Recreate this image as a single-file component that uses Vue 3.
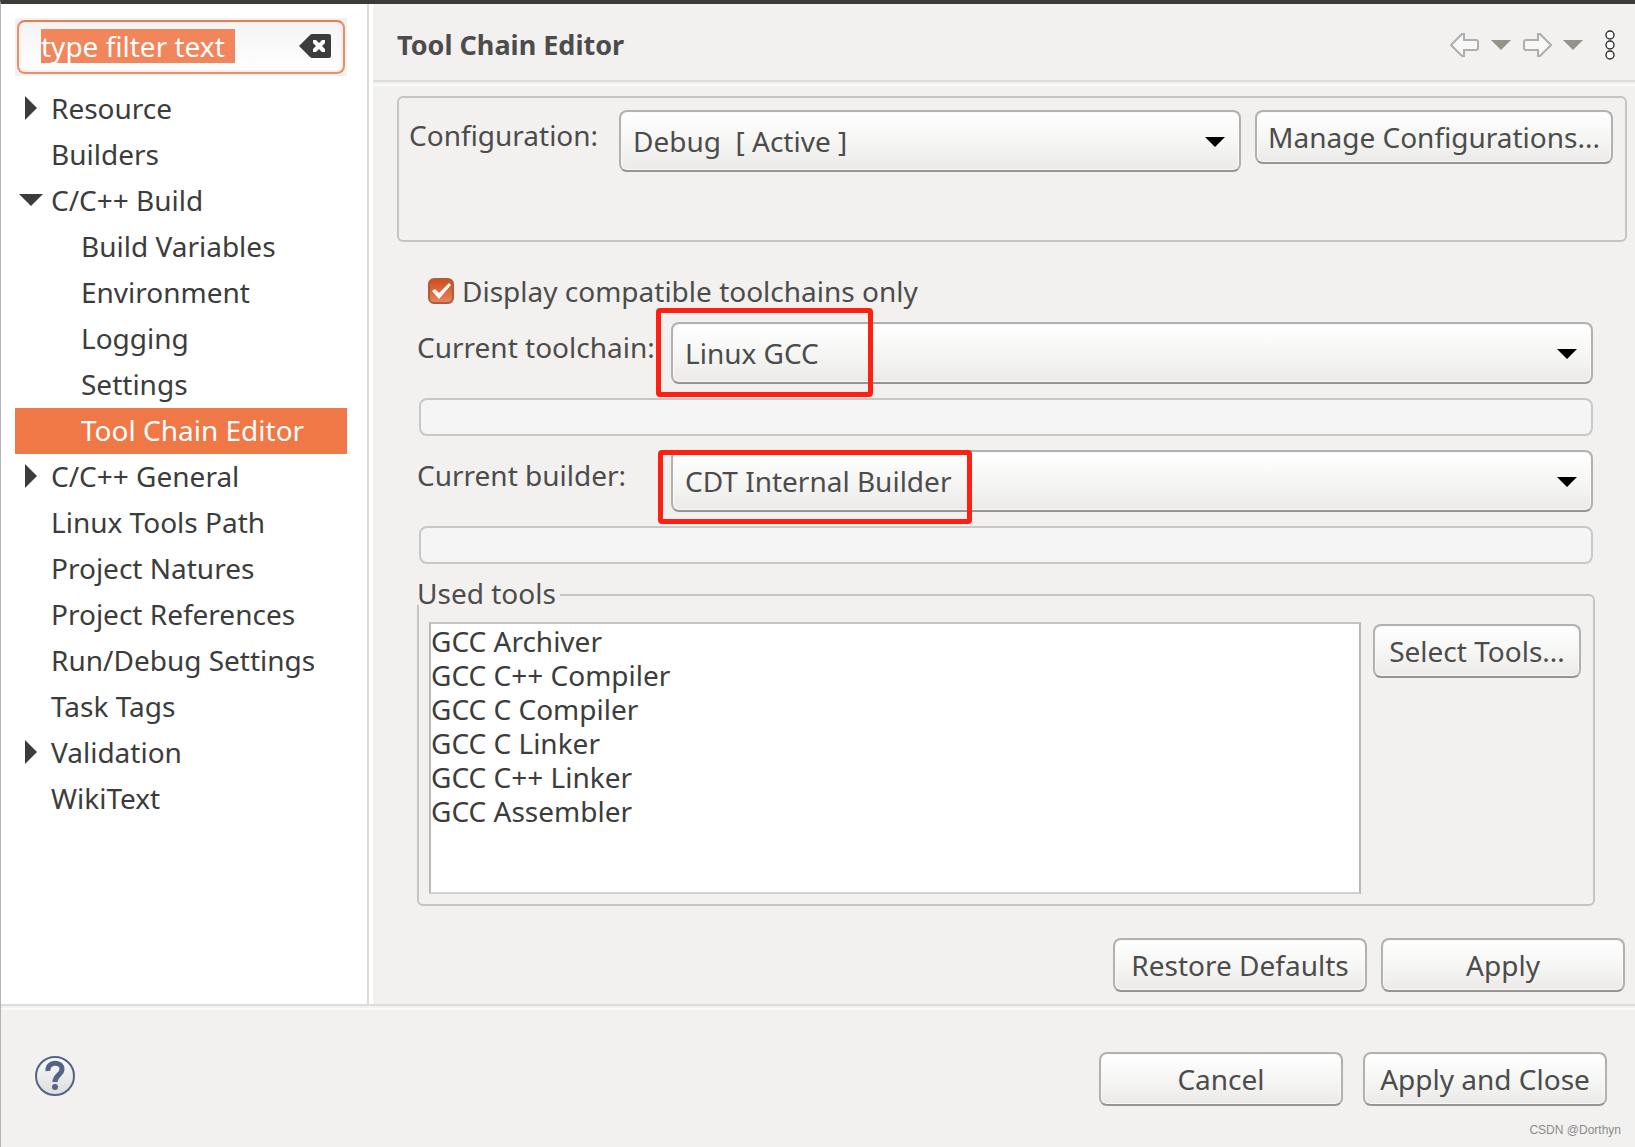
<script setup>
import { ref } from 'vue'

const filterText = ref('type filter text')
const selectedPage = ref('Tool Chain Editor')
const compatibleOnly = ref(true)

const pages = [
  { name: 'Resource', state: 'closed' },
  { name: 'Builders' },
  { name: 'C/C++ Build', state: 'open' },
  { name: 'Build Variables', child: true },
  { name: 'Environment', child: true },
  { name: 'Logging', child: true },
  { name: 'Settings', child: true },
  { name: 'Tool Chain Editor', child: true },
  { name: 'C/C++ General', state: 'closed' },
  { name: 'Linux Tools Path' },
  { name: 'Project Natures' },
  { name: 'Project References' },
  { name: 'Run/Debug Settings' },
  { name: 'Task Tags' },
  { name: 'Validation', state: 'closed' },
  { name: 'WikiText' },
]

const tools = [
  'GCC Archiver',
  'GCC C++ Compiler',
  'GCC C Compiler',
  'GCC C Linker',
  'GCC C++ Linker',
  'GCC Assembler',
]
</script>

<template>
  <div class="window">
    <div class="columns">
      <aside class="sidebar">
        <div class="filter">
          <div class="filter-box">
            <div class="filter-text">
              <input v-model="filterText" type="text" aria-label="Filter" />
            </div>
            <button class="clear" type="button" aria-label="Clear filter" @click="filterText = ''">
              <svg width="32" height="24" viewBox="0 0 32 24">
                <path d="M0 12 11 1Q12 0 13 0H30Q32 0 32 2V22Q32 24 30 24H13Q12 24 11 23Z" fill="#3c3c3c" />
                <path d="M14 6H17L20 9 23 6H26V9L23 12 26 15V18H23L20 15 17 18H14V15L17 12 14 9Z" fill="#fff" />
              </svg>
            </button>
          </div>
        </div>
        <ul class="tree" role="tree">
          <li
            v-for="page in pages"
            :key="page.name"
            role="treeitem"
            :class="{ child: page.child, selected: page.name === selectedPage }"
            @click="selectedPage = page.name"
          >
            <span class="twisty">
              <svg v-if="page.state === 'closed'" width="12" height="24" viewBox="0 0 12 24">
                <path d="M0 0 12 12 0 24Z" fill="#3c3c3c" />
              </svg>
              <svg v-if="page.state === 'open'" width="24" height="12" viewBox="0 0 24 12">
                <path d="M0 0H24L12 12Z" fill="#3c3c3c" />
              </svg>
            </span>
            <span>{{ page.name }}</span>
          </li>
        </ul>
      </aside>

      <main class="page">
        <header class="page-head">
          <h1>Tool Chain Editor</h1>
          <nav class="history">
            <button type="button" aria-label="Back">
              <svg width="30" height="24" viewBox="0 0 30 24">
                <path d="M1 12 12 1H14V7H26Q28 7 28 9V15Q28 17 26 17H14V23H12Z" fill="#f8f8f8" stroke="#aeaeac" stroke-width="2" />
              </svg>
            </button>
            <button type="button" aria-label="Back history">
              <svg width="20" height="10" viewBox="0 0 20 10"><path d="M0 0H20L10 10Z" fill="#95928a" /></svg>
            </button>
            <button type="button" aria-label="Forward">
              <svg width="30" height="24" viewBox="0 0 30 24">
                <path d="M29 12 18 1H16V7H4Q2 7 2 9V15Q2 17 4 17H16V23H18Z" fill="#f8f8f8" stroke="#aeaeac" stroke-width="2" />
              </svg>
            </button>
            <button type="button" aria-label="Forward history">
              <svg width="20" height="10" viewBox="0 0 20 10"><path d="M0 0H20L10 10Z" fill="#95928a" /></svg>
            </button>
            <button class="menu" type="button" aria-label="View menu">
              <svg width="10" height="30" viewBox="0 0 10 30" fill="#fff" stroke="#2e2e2e" stroke-width="1.4">
                <circle cx="5" cy="5" r="4" />
                <circle cx="5" cy="15" r="4" />
                <circle cx="5" cy="25" r="4" />
              </svg>
            </button>
          </nav>
        </header>

        <div class="page-body">
          <section class="configuration">
            <label for="configuration">Configuration:</label>
            <div class="combo">
              <select id="configuration">
                <option>Debug&nbsp; [ Active ]</option>
              </select>
              <svg class="arrow" width="20" height="10" viewBox="0 0 20 10"><path d="M0 0H20L10 10Z" /></svg>
            </div>
            <button class="btn" type="button">Manage Configurations...</button>
          </section>

          <section class="editor">
            <label class="check">
              <input v-model="compatibleOnly" type="checkbox" />
              <svg v-if="compatibleOnly" class="tick" width="26" height="26" viewBox="0 0 26 26">
                <path d="M4 13 7 11 11 15 21 5 23 7 11 21Z" fill="#fff" />
              </svg>
              <span>Display compatible toolchains only</span>
            </label>

            <div class="field">
              <label for="toolchain">Current toolchain:</label>
              <div class="combo">
                <select id="toolchain">
                  <option>Linux GCC</option>
                </select>
                <svg class="arrow" width="20" height="10" viewBox="0 0 20 10"><path d="M0 0H20L10 10Z" /></svg>
                <span class="mark mark-toolchain"></span>
              </div>
            </div>
            <input class="status" type="text" aria-label="Toolchain status" readonly />

            <div class="field">
              <label for="builder">Current builder:</label>
              <div class="combo">
                <select id="builder">
                  <option>CDT Internal Builder</option>
                </select>
                <svg class="arrow" width="20" height="10" viewBox="0 0 20 10"><path d="M0 0H20L10 10Z" /></svg>
                <span class="mark mark-builder"></span>
              </div>
            </div>
            <input class="status" type="text" aria-label="Builder status" readonly />

            <fieldset class="used">
              <legend>Used tools</legend>
              <div class="used-row">
                <ul class="tools">
                  <li v-for="tool in tools" :key="tool">{{ tool }}</li>
                </ul>
                <button class="btn" type="button">Select Tools...</button>
              </div>
            </fieldset>
          </section>

          <div class="page-actions">
            <button class="btn restore" type="button">Restore Defaults</button>
            <button class="btn wide" type="button">Apply</button>
          </div>
        </div>
      </main>
    </div>

    <footer class="footer">
      <button class="help" type="button" aria-label="Help">
        <svg width="40" height="40" viewBox="0 0 40 40">
          <defs>
            <linearGradient id="help-fill" x1="0" y1="0" x2="0" y2="1">
              <stop offset="0" stop-color="#fbfbfb" />
              <stop offset="1" stop-color="#dcdcdc" />
            </linearGradient>
          </defs>
          <circle cx="20" cy="20" r="19" fill="url(#help-fill)" stroke="#536486" stroke-width="2" />
          <path d="M13 15C12 5 27 5 27 13C27 19 20 19 20 26" fill="none" stroke="#536486" stroke-width="5" />
          <circle cx="20" cy="31" r="3" fill="#536486" />
        </svg>
      </button>
      <div class="dialog-actions">
        <button class="btn wide" type="button">Cancel</button>
        <button class="btn wide" type="button">Apply and Close</button>
      </div>
      <small class="credit">CSDN @Dorthyn</small>
    </footer>
  </div>
</template>

<style>
body {
  margin: 0;
  background: #f2f1f0;
}
</style>

<style scoped>
* {
  box-sizing: border-box;
}

.window {
  display: flex;
  flex-direction: column;
  min-height: 100vh;
  border-top: 4px solid #3c3b37;
  border-left: 1px solid #b4b4b4;
  background: #f2f1f0;
  color: #4c4c4c;
  font: 28px/34px "Noto Sans", "Open Sans", sans-serif;
  white-space: nowrap;
}

button,
input,
select {
  font: inherit;
  color: inherit;
}

button {
  padding: 0;
  border: 0;
  background: none;
}

svg {
  display: block;
}

ul {
  margin: 0;
  padding: 0;
  list-style: none;
}

.columns {
  display: flex;
  flex: 1;
}

/* Sidebar */
.sidebar {
  flex: none;
  width: 372px;
  padding: 14px 20px 0 14px;
  background: linear-gradient(#dcdcdc, #dcdcdc) 366px 0 / 2px 100% no-repeat #fff;
}

.filter {
  width: 332px;
  padding: 2px;
  background: #f2f1f0;
}

.filter-box {
  display: flex;
  align-items: center;
  justify-content: space-between;
  height: 54px;
  padding: 0 12px 2px 22px;
  border: 2px solid #e5906c;
  border-top-color: #dd7f57;
  border-radius: 8px;
  background: linear-gradient(#f4f4f4, #fff);
  box-shadow: inset 0 0 0 2px #fbeee8;
}

.filter-text {
  display: flex;
  width: 194px;
}

.filter-text input {
  width: 100%;
  height: 34px;
  padding: 0;
  border: 0;
  background: #f1855b;
  color: #fff;
}

.tree {
  width: 332px;
  padding-top: 10px;
  color: #3c3c3c;
}

.tree li {
  display: flex;
  align-items: center;
  height: 46px;
  padding-bottom: 2px;
}

.tree .child {
  padding-left: 30px;
}

.tree .selected {
  background: #f07746;
  color: #fff;
}

.twisty {
  display: flex;
  justify-content: center;
  width: 36px;
  padding-right: 4px;
}

/* Page */
.page {
  display: flex;
  flex: 1;
  flex-direction: column;
  min-width: 0;
}

.page-head {
  display: flex;
  align-items: center;
  justify-content: space-between;
  height: 82px;
  padding: 2px 20px 0 24px;
  border-bottom: 2px solid #fafaf9;
  background: linear-gradient(#dddcdb, #dddcdb) 0 76px / 100% 2px no-repeat;
}

h1 {
  margin: 0;
  font-size: 27px;
  font-weight: 700;
}

.history {
  display: flex;
  align-items: center;
  gap: 11px;
}

.menu {
  margin-left: 11px;
}

.page-body {
  padding: 10px 8px 12px 24px;
}

.configuration {
  display: flex;
  align-items: flex-start;
  gap: 14px;
  height: 146px;
  padding: 12px;
  border: 2px solid #c5c4c2;
  border-radius: 6px;
}

.configuration label {
  width: 196px;
  padding-top: 8px;
  margin-left: -2px;
}

.combo {
  position: relative;
  flex: 1;
}

.combo select {
  display: block;
  width: 100%;
  height: 62px;
  padding: 0 48px 0 12px;
  line-height: 42px;
  appearance: none;
}

.combo select,
.btn {
  border: 2px solid #b2b1b0;
  border-bottom-color: #959493;
  border-radius: 8px;
  background: linear-gradient(#fff, #f6f6f5 50%, #ebeae9);
  box-shadow: inset 0 0 1px 1px #f9f9f9;
}

.arrow {
  position: absolute;
  top: 27px;
  right: 16px;
  pointer-events: none;
}

.btn {
  height: 54px;
  padding: 0 11px;
}

.wide {
  width: 244px;
  padding: 0;
}

.restore {
  width: 254px;
  padding: 0;
}

.editor {
  padding: 32px 34px 0 20px;
}

.check {
  position: relative;
  display: flex;
  align-items: center;
  gap: 8px;
  height: 34px;
  margin-left: 11px;
}

.check input {
  width: 26px;
  height: 26px;
  margin: 0;
  border: 2px solid #b25b3b;
  border-radius: 6px;
  background: #fff;
  appearance: none;
}

.check input:checked {
  background: linear-gradient(#cf4f1d, #e6835c);
}

.tick {
  position: absolute;
  top: 4px;
  left: 0;
  pointer-events: none;
}

.field {
  display: flex;
  align-items: flex-start;
  padding-top: 14px;
}

.field label {
  width: 254px;
  padding-top: 8px;
}

.mark {
  position: absolute;
  border: 5px solid #ff2012;
  border-radius: 4px;
  pointer-events: none;
}

.mark-toolchain {
  top: -14px;
  left: -15px;
  width: 217px;
  height: 89px;
}

.mark-builder {
  top: 0;
  left: -13px;
  width: 314px;
  height: 74px;
}

.status {
  display: block;
  width: calc(100% - 2px);
  height: 38px;
  margin: 14px 0 0 2px;
  border: 2px solid #c8c8c7;
  border-radius: 8px;
  background: #f5f5f5;
}

.used {
  min-width: 0;
  margin: 21px -2px 0 0;
  padding: 17px 12px 10px 10px;
  border: 2px solid #c5c4c2;
  border-radius: 6px;
}

.used legend {
  margin-left: -12px;
  padding: 0 4px 4px 0;
  background: #f2f1f0;
  line-height: 16px;
}

.used-row {
  display: flex;
  align-items: flex-start;
  gap: 12px;
}

.used .btn {
  width: 208px;
  margin-top: 2px;
}

.tools {
  flex: 1;
  height: 272px;
  border: 2px solid #b9b8b5;
  border-top-color: #c5c4c2;
  border-bottom-color: #d2d1cf;
  background: #fff;
  color: #3c3c3c;
}

.page-actions {
  display: flex;
  justify-content: flex-end;
  gap: 14px;
  padding: 32px 2px 0 0;
}

/* Footer */
.footer {
  position: relative;
  display: flex;
  align-items: flex-start;
  justify-content: space-between;
  height: 143px;
  padding: 46px 28px 0 34px;
  border-top: 2px solid #dddcdb;
  background: linear-gradient(#fafaf9, #fafaf9) 0 2px / 100% 2px no-repeat;
}

.help {
  margin-top: 4px;
}

.dialog-actions {
  display: flex;
  gap: 20px;
}

.credit {
  position: absolute;
  right: 14px;
  bottom: 8px;
  color: #8b8b8b;
  font: 12px/18px "Liberation Sans", Arial, sans-serif;
}
</style>
